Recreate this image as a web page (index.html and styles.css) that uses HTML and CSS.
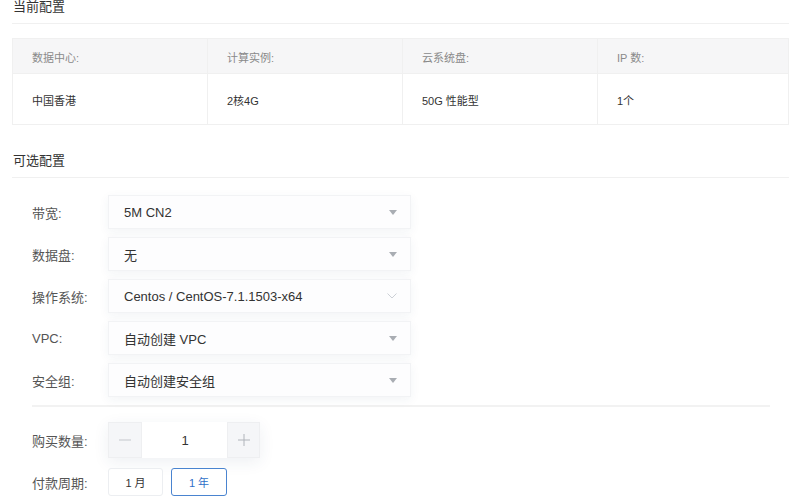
FILE: index.html
```html
<!DOCTYPE html>
<html lang="zh">
<head>
<meta charset="utf-8">
<link rel="stylesheet" href="styles.css">
</head>
<body>
<div class="page">
  <div class="section-title first">当前配置</div>
  <div class="spec-table">
    <div class="cell head">数据中心:</div>
    <div class="cell head">计算实例:</div>
    <div class="cell head">云系统盘:</div>
    <div class="cell head last">IP 数:</div>
    <div class="cell body">中国香港</div>
    <div class="cell body">2核4G</div>
    <div class="cell body">50G 性能型</div>
    <div class="cell body last">1个</div>
  </div>

  <div class="section-title second">可选配置</div>
  <div class="form">
    <div class="row">
      <div class="label">带宽:</div>
      <div class="select"><span>5M CN2</span><i class="caret"></i></div>
    </div>
    <div class="row">
      <div class="label">数据盘:</div>
      <div class="select"><span>无</span><i class="caret"></i></div>
    </div>
    <div class="row">
      <div class="label">操作系统:</div>
      <div class="select"><span>Centos / CentOS-7.1.1503-x64</span>
        <svg class="chev" width="10" height="6" viewBox="0 0 10 6"><path d="M0.5 0.5 L5 5 L9.5 0.5" fill="none" stroke="#ccd0d6" stroke-width="1"/></svg>
      </div>
    </div>
    <div class="row">
      <div class="label">VPC:</div>
      <div class="select"><span>自动创建 VPC</span><i class="caret"></i></div>
    </div>
    <div class="row">
      <div class="label">安全组:</div>
      <div class="select"><span>自动创建安全组</span><i class="caret"></i></div>
    </div>
    <div class="divider"></div>
    <div class="row qty">
      <div class="label">购买数量:</div>
      <div class="stepper">
        <div class="step minus">
          <svg width="12" height="2" viewBox="0 0 12 2"><path d="M0 1 H12" stroke="#c4c7cc" stroke-width="1"/></svg>
        </div>
        <div class="step-value">1</div>
        <div class="step plus">
          <svg width="12" height="12" viewBox="0 0 12 12"><path d="M0 6 H12 M6 0 V12" stroke="#b0b4ba" stroke-width="1"/></svg>
        </div>
      </div>
    </div>
    <div class="row period">
      <div class="label">付款周期:</div>
      <div class="periods">
        <div class="pbtn">1 月</div>
        <div class="pbtn active">1 年</div>
      </div>
    </div>
  </div>
</div>
</body>
</html>
```
FILE: styles.css
```css
* { box-sizing: border-box; }
body {
  margin: 0;
  background: #fff;
  font-family: "Liberation Sans", "Noto Sans CJK SC", sans-serif;
  color: #333;
}
.page {
  padding: 0 11px 0 12px;
}
.section-title {
  font-size: 13px;
  line-height: 14px;
  color: #333;
  padding: 0 0 9px 1px;
  border-bottom: 1px solid #f0f0f0;
}
.section-title.second { margin-top: 29px; }

.spec-table {
  margin-top: 14px;
  display: grid;
  grid-template-columns: 195px 195px 195px 1fr;
  grid-template-rows: 35px 50px;
  border: 1px solid #f0f0f0;
  font-size: 11px;
}
.cell {
  display: flex;
  align-items: center;
  padding-left: 19px;
  border-right: 1px solid #f0f0f0;
}
.cell.last { border-right: none; }
.cell.head {
  background: #f6f6f7;
  color: #8a8a8a;
  border-bottom: 1px solid #f0f0f0;
  padding-top: 1px;
}
.cell.body {
  color: #333;
  padding-top: 1px;
}

.form {
  padding-left: 20px;
  padding-top: 17px;
}
.row {
  display: flex;
  align-items: center;
  margin-bottom: 8px;
}
.label {
  width: 76px;
  font-size: 13px;
  color: #555;
}
.select {
  width: 303px;
  height: 34px;
  display: flex;
  align-items: center;
  justify-content: space-between;
  padding: 0 12px 0 15px;
  background: #fdfdfe;
  border: 1px solid #f2f3f5;
  box-shadow: 0 3px 10px rgba(40, 60, 100, 0.06);
  font-size: 13px;
  color: #333;
}
.caret {
  width: 0;
  height: 0;
  border-left: 4px solid transparent;
  border-right: 4px solid transparent;
  border-top: 5px solid #a9adb3;
  margin-right: 1px;
}
.chev { margin-right: 1px; }
.divider {
  width: 738px;
  height: 2px;
  background: #f2f2f2;
  margin: 2px 0 15px;
}
.row.qty { margin-bottom: 10px; }
.stepper {
  display: flex;
  height: 36px;
  box-shadow: 0 4px 16px rgba(40, 60, 100, 0.08);
}
.step {
  width: 34px;
  display: flex;
  align-items: center;
  justify-content: center;
  background: #f5f6f8;
  border: 1px solid #eeeff1;
}
.step.plus { width: 33px; }
.step-value {
  width: 82px;
  margin: 0 1px 0 2px;
  display: flex;
  align-items: center;
  justify-content: center;
  background: #fff;
  font-size: 13px;
  color: #333;
}
.periods {
  display: flex;
  gap: 8px;
}
.pbtn {
  width: 55px;
  height: 28px;
  display: flex;
  align-items: center;
  justify-content: center;
  border: 1px solid #eceef1;
  border-radius: 3px;
  font-size: 11px;
  color: #333;
  background: #fff;
}
.pbtn.active {
  width: 56px;
  border: 1px solid #4a84d0;
  color: #2f6fc8;
}
```
